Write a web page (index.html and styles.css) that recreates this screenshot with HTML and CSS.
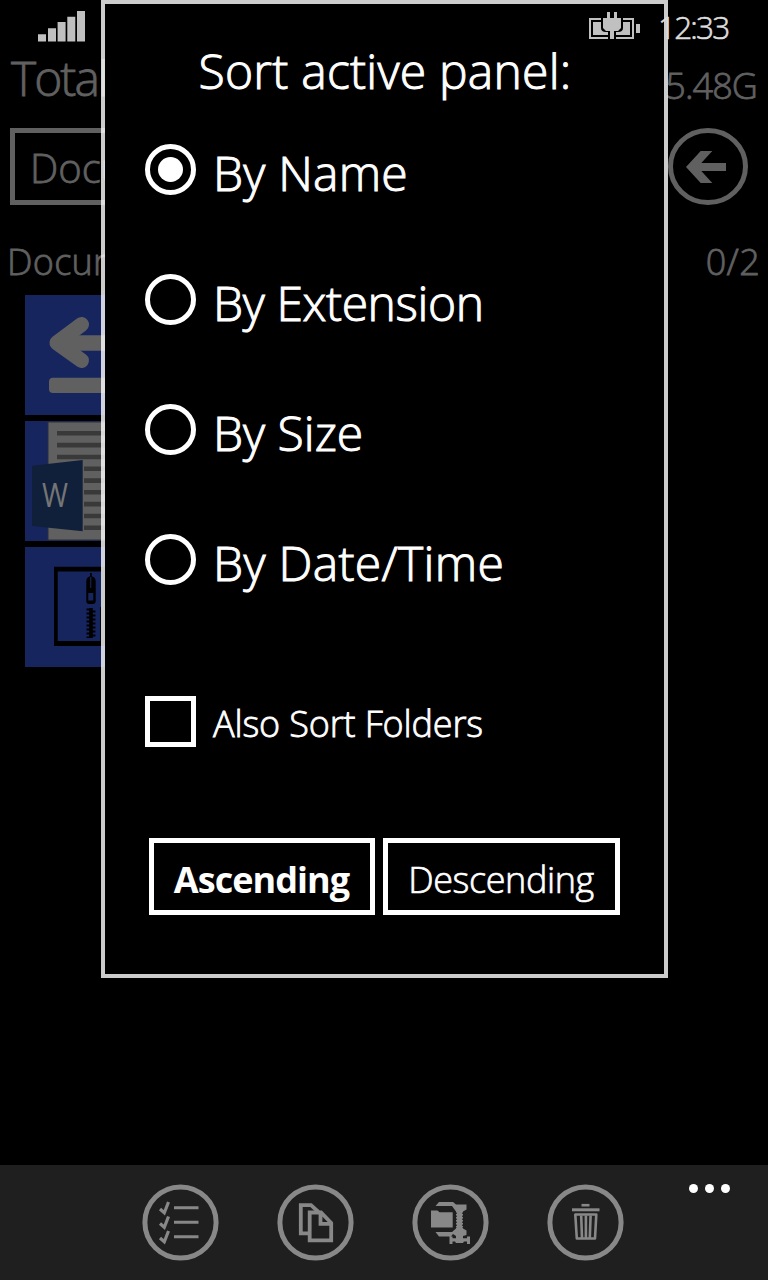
FILE: index.html
```html
<!DOCTYPE html>
<html lang="en">
<head>
<meta charset="utf-8">
<title>Sort active panel</title>
<link rel="stylesheet" href="styles.css">
</head>
<body>
<div class="phone">
  <main class="app">
    <header class="app-header">
      <h1 class="app-title">Total</h1>
      <span class="free-space">5.48G</span>
    </header>
    <div class="location">
      <div class="location-box">Docu</div>
      <svg class="back" width="80" height="77" viewBox="0 0 80 77">
        <ellipse cx="40" cy="38.5" rx="37.5" ry="36" fill="none" stroke="#606060" stroke-width="5"/>
        <path d="M18 39 32.7 23H44.3L33.3 35H58V43H33.3L44.3 55H32.7Z" fill="#606060"/>
      </svg>
    </div>
    <div class="path-row"><span class="path">Docum</span><span class="count">0/2</span></div>
    <div class="files">
      <svg class="tile" width="120" height="120" viewBox="0 0 120 120">
        <path d="M56.5 29.5 32 47.8 56.500 65.500" fill="none" stroke="#606060" stroke-width="15" stroke-linecap="round" stroke-linejoin="round"/>
        <path d="M30 48 52 30V65ZM40 40.200H96V55.800H40Z" fill="#606060"/>
        <rect x="24" y="82.700" width="72" height="15.300" rx="4" fill="#606060"/>
      </svg>
      <svg class="tile" width="120" height="120" viewBox="0 0 120 120">
        <rect x="23" y="1" width="90" height="118" fill="#606060" stroke="#2b2e42"/>
        <path d="M32 12.300H104M32 24.100H104M32 36H104M59 47.800H104M59 59.600H104M59 71.300H104M59 83.100H104M59 95H104M59 106.700H104" stroke="#393939" stroke-width="4.600"/>
        <path d="M7 44.700 57.700 39V110.300L7 105Z" fill="#10203a"/>
        <text class="word-letter" x="17" y="86.300" textLength="26" lengthAdjust="spacingAndGlyphs">W</text>
      </svg>
      <svg class="tile" width="120" height="120" viewBox="0 0 120 120">
        <path fill-rule="evenodd" d="M29 19.700H112V99H29ZM32.700 24.500V94H75.200V60H76V24.500Z" fill="#000"/>
        <path d="M65 26h1.800v3.200q3.900 1 3.900 5V54q0 3-3 3h-3.400q-3 0-3-3V34.200q0-4 3.700-5Z" fill="#000"/>
        <path d="M65.200 30h1.100v11h-1.100ZM63.300 46h5v7.500h-5Z" fill="#17255f"/>
        <path d="M66 61V91" stroke="#000" stroke-width="3.600"/>
        <path d="M64 61.500V91" stroke="#000" stroke-width="5" stroke-dasharray="2 2"/>
        <path d="M68.200 63.500V90" stroke="#000" stroke-width="4.500" stroke-dasharray="2 2"/>
      </svg>
    </div>
  </main>

  <footer class="app-bar">
    <div class="actions">
      <svg class="action" width="77" height="77" viewBox="0 0 77 77">
        <circle cx="38.500" cy="38.500" r="35.600"/>
        <path class="thin" d="M32 23.800H56.500M32 38.300H56.500M32 52.800H56.500"/>
        <path class="check" d="M18 25 22.300 28.800 24 24.500 26.500 18M18 39.500 22.300 43.300 24 39 26.500 32.500M18 54 22.300 57.800 24 53.500 26.500 47"/>
      </svg>
      <svg class="action" width="77" height="77" viewBox="0 0 77 77">
        <circle cx="38.500" cy="38.500" r="35.600"/>
        <path class="line" d="M32 49.300H23.800V21.200H34L41.500 28"/>
        <path class="line" d="M32.700 28.500H44L54.200 39V56.300H32.700ZM43.500 28.500V39.800H54"/>
      </svg>
      <svg class="action" width="77" height="77" viewBox="0 0 77 77">
        <circle cx="38.500" cy="38.500" r="35.600"/>
        <path class="fill" d="M19 26.500H25.500L27.500 28.300H40.700V43.500H19ZM23.500 22 27 18H41L44 20.500H54.500V25.500L51 27.500V44.500L54.500 46.500V51L51 52V54.300H55V52.500H58V60H55V57.500H52L51 59H44L43 57.500H40.500V60H37.500V52.500H40.500V54.300H44V52L41 50 39 52.500H27L23.500 48H40L44 44.500V27.500L40 22Z"/>
        <path d="M44 28.500V44M51 28.500V44" fill="none" stroke="#1f1f1f" stroke-width="1.600" stroke-dasharray="1.500 1.500"/>
      </svg>
      <svg class="action" width="77" height="77" viewBox="0 0 77 77">
        <circle cx="38.500" cy="38.500" r="35.600"/>
        <path class="thin" d="M25 25.800H52.500"/>
        <path class="bin" d="M34.500 21.200H42.500"/>
        <path class="bin" d="M28.300 30.500H49.300L48 54.500H29.800Z"/>
        <path class="bin" d="M34.200 31.500 35 54M38.900 31.500V54M43.600 31.500 42.800 54"/>
      </svg>
    </div>
    <div class="more"><i></i><i></i><i></i></div>
  </footer>

  <section class="dialog" role="dialog">
    <h2 class="dialog-title">Sort active panel:</h2>
    <div class="options">
      <div class="option"><span class="radio checked"></span><span class="label name">By Name</span></div>
      <div class="option"><span class="radio"></span><span class="label extension">By Extension</span></div>
      <div class="option"><span class="radio"></span><span class="label size">By Size</span></div>
      <div class="option"><span class="radio"></span><span class="label date">By Date/Time</span></div>
    </div>
    <div class="folders"><span class="checkbox"></span><span class="folders-label">Also Sort Folders</span></div>
    <div class="buttons">
      <button class="button ascending">Ascending</button>
      <button class="button descending">Descending</button>
    </div>
  </section>

  <div class="status-bar">
    <svg class="signal" width="47" height="31" viewBox="0 0 47 31">
      <path d="M0 23.300H8V30.500H0ZM10 17.300H18V30.500H10ZM19.600 11H27.600V30.500H19.600ZM29.300 5.700H37.300V30.500H29.300ZM39 0H47V30.500H39Z" fill="#c0c0c0"/>
    </svg>
    <svg class="battery" width="51" height="27" viewBox="0 0 51 27">
      <path fill="#c0c0c0" d="M0 6H12V8H2V25H19V27H0ZM34 6H45V27H27V25H43V8H34ZM47 12H51V21H47ZM4 10H12V16Q12 20 17 20H19V23H4ZM34 10H41V23H27V20H29Q34 20 34 16ZM18 0H21V6H25V0H28V6H32V16L29 19H25V27H21V19H17L14 16V6H18Z"/>
    </svg>
    <span class="clock">12:33</span>
  </div>
</div>
</body>
</html>
```
FILE: styles.css
```css
* { box-sizing: border-box; }
body {
  margin: 0;
  background: #000;
  color: #fff;
  font-family: "Open Sans", "Noto Sans", sans-serif;
  font-weight: 300;
  -webkit-text-stroke: 1px currentColor;
}
h1, h2 { margin: 0; font-weight: inherit; }
svg { display: block; flex: none; }
.phone {
  position: relative;
  display: flex;
  flex-direction: column;
  width: 768px;
  height: 1280px;
  overflow: hidden;
}

.app { flex: 1; padding-top: 48px; color: #606060; -webkit-text-stroke-width: 0.8px; }
.app-header { display: flex; justify-content: space-between; height: 60px; padding: 0 11px 0 11px; }
.app-title { font-size: 48px; line-height: 60px; letter-spacing: -2px; }
.free-space { padding-top: 8px; font-size: 36px; line-height: 60px; letter-spacing: -0.9px; }
.location { display: flex; justify-content: space-between; margin-top: 20px; padding: 0 20px 0 10px; }
.location-box {
  width: 640px;
  height: 77px;
  padding-left: 15px;
  border: 5px solid #606060;
  font-size: 40px;
  line-height: 69px;
}
.path-row {
  display: flex;
  justify-content: space-between;
  height: 50px;
  margin-top: 31px;
  padding: 0 8px 0 7px;
  font-size: 36px;
  line-height: 52px;
  letter-spacing: 0.3px;
}
.files { display: flex; flex-direction: column; gap: 6px; padding: 9px 0 0 25px; }
.tile { background: #17255f; }
.word-letter { fill: #757575; font-size: 32px; font-weight: 400; -webkit-text-stroke: 0; }

.app-bar { position: relative; height: 115px; padding: 19px 0 0 142px; background: #1f1f1f; }
.actions { display: flex; gap: 58px; }
.action { fill: none; stroke: #888; }
.action circle { stroke-width: 5; }
.action .thin { stroke-width: 3; }
.action .check { stroke-width: 3.2; }
.action .line { stroke-width: 3.8; }
.action .bin { stroke-width: 2.6; stroke-linejoin: round; }
.action .fill { fill: #888; stroke: none; }
.more { position: absolute; top: 19px; right: 38px; display: flex; gap: 7px; }
.more i { width: 9px; height: 9px; border-radius: 50%; background: #fff; }

.dialog {
  position: absolute;
  top: 0;
  left: 101px;
  width: 567px;
  height: 978px;
  padding: 37px 40px 0;
  border: 4px solid rgba(255, 255, 255, 0.8);
  background: #000;
  background-clip: padding-box;
}
.dialog-title { padding-left: 1px; font-size: 48px; line-height: 60px; letter-spacing: 0.25px; text-align: center; }
.options { display: flex; flex-direction: column; gap: 70px; margin-top: 41px; }
.option { display: flex; gap: 17px; height: 60px; padding-top: 2px; }
.radio {
  display: grid;
  place-items: center;
  width: 51px;
  height: 51px;
  border: 5px solid #fff;
  border-radius: 50%;
}
.radio.checked::after { content: ""; width: 25px; height: 25px; border-radius: 50%; background: #fff; }
.label { margin-top: -1px; font-size: 48px; line-height: 60px; }
.name { letter-spacing: 0.2px; }
.extension { letter-spacing: -0.4px; }
.size { letter-spacing: 0; }
.date { letter-spacing: 0.3px; }
.folders { display: flex; gap: 17px; height: 51px; margin-top: 104px; }
.checkbox { width: 51px; height: 51px; border: 5px solid #fff; }
.folders-label { padding-top: 2px; font-size: 36px; line-height: 51px; letter-spacing: -0.15px; -webkit-text-stroke-width: 0.8px; }
.buttons { display: flex; gap: 8px; margin: 91px 0 0 4px; }
.button {
  height: 77px;
  padding: 6px 0 0;
  border: 5px solid #fff;
  background: none;
  color: #fff;
  font: 300 36px/60px "Open Sans", "Noto Sans", sans-serif;
  -webkit-text-stroke: 0.7px #fff;
}
.ascending { width: 226px; padding-right: 1px; font-weight: 700; letter-spacing: -0.95px; -webkit-text-stroke-width: 0; }
.descending { width: 237px; padding-right: 1px; letter-spacing: -0.39px; }

.status-bar {
  position: absolute;
  top: 0;
  left: 0;
  display: flex;
  align-items: flex-start;
  width: 768px;
  height: 46px;
  padding: 11px 0 0 38px;
  color: #ddd;
}
.battery { margin: 1px 0 0 504px; }
.clock { margin-left: 18px; font-size: 31.5px; line-height: 32px; letter-spacing: -1.8px; -webkit-text-stroke-width: 0.6px; }
```
